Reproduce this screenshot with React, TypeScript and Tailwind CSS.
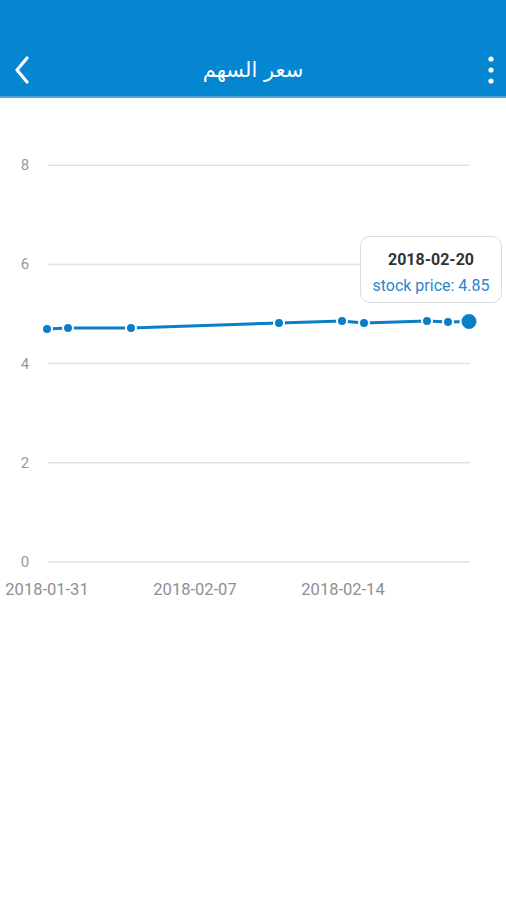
import React from "react";

const points = [
  { x: 47, v: 4.7 },
  { x: 68, v: 4.72 },
  { x: 131, v: 4.72 },
  { x: 279, v: 4.82 },
  { x: 342, v: 4.86 },
  { x: 364, v: 4.82 },
  { x: 427, v: 4.86 },
  { x: 448, v: 4.84 },
  { x: 469, v: 4.85 },
];

const yOf = (v: number) => 562 - v * 49.6;

function Chart() {
  const ticks = [8, 6, 4, 2, 0];
  return (
    <svg width="506" height="520" viewBox="0 98 506 520" className="block">
      {ticks.map((t) => (
        <g key={t}>
          <line x1="48" x2="470" y1={yOf(t)} y2={yOf(t)} stroke="#e2e2e2" strokeWidth="1.5" />
          <text x="25" y={yOf(t) + 5} textAnchor="middle" fontSize="15" fill="#999" fontFamily="Roboto, sans-serif">
            {t}
          </text>
        </g>
      ))}
      {[
        { x: 47, l: "2018-01-31" },
        { x: 195, l: "2018-02-07" },
        { x: 343, l: "2018-02-14" },
      ].map((d) => (
        <text key={d.l} x={d.x} y="595" textAnchor="middle" fontSize="16.5" fill="#8f8f8f" fontFamily="Roboto, sans-serif">
          {d.l}
        </text>
      ))}
      <polyline
        points={points.map((p) => `${p.x},${yOf(p.v)}`).join(" ")}
        fill="none"
        stroke="#0a7fc8"
        strokeWidth="3"
        strokeLinejoin="round"
      />
      {points.map((p, i) =>
        i === points.length - 1 ? (
          <circle key={i} cx={p.x} cy={yOf(p.v)} r="8.5" fill="#0a7fc8" stroke="#fff" strokeWidth="2" />
        ) : (
          <circle key={i} cx={p.x} cy={yOf(p.v)} r="5" fill="#0a7fc8" stroke="#fff" strokeWidth="2" />
        )
      )}
    </svg>
  );
}

export default function App() {
  return (
    <div className="w-[506px] h-[900px] bg-white" style={{ fontFamily: "Roboto, 'Noto Sans', 'DejaVu Sans', sans-serif" }}>
      <header className="h-[98px] bg-[#0586d0] border-b-2 border-[#4aa6dd] flex items-end pb-[8px]">
        <div className="w-full h-[36px] grid grid-cols-[60px_1fr_60px] items-center">
          <div className="pl-[13px] flex">
            <svg width="18" height="28" viewBox="0 0 18 28">
              <path d="M14 2 L4 14 L14 26" fill="none" stroke="#fff" strokeWidth="3.2" strokeLinecap="round" strokeLinejoin="round" />
            </svg>
          </div>
          <h1 className="text-white text-[21px] leading-none text-center" style={{ fontFamily: "'DejaVu Sans', 'Noto Sans', sans-serif" }}>
            سعر السهم
          </h1>
          <div className="flex justify-end pr-[11px]">
            <svg width="8" height="28" viewBox="0 0 8 28">
              <circle cx="4" cy="3" r="2.6" fill="#fff" />
              <circle cx="4" cy="14" r="2.6" fill="#fff" />
              <circle cx="4" cy="25" r="2.6" fill="#fff" />
            </svg>
          </div>
        </div>
      </header>
      <div className="relative">
        <Chart />
        <div className="absolute left-[360px] top-[138px] w-[142px] h-[67px] pt-[6px] bg-white border border-[#dcdcdc] rounded-[10px] flex flex-col items-center justify-center gap-[10px] text-[16px] leading-none">
          <span className="font-bold text-[#333]">2018-02-20</span>
          <span className="text-[#2a86cc]">stock price: 4.85</span>
        </div>
      </div>
    </div>
  );
}
